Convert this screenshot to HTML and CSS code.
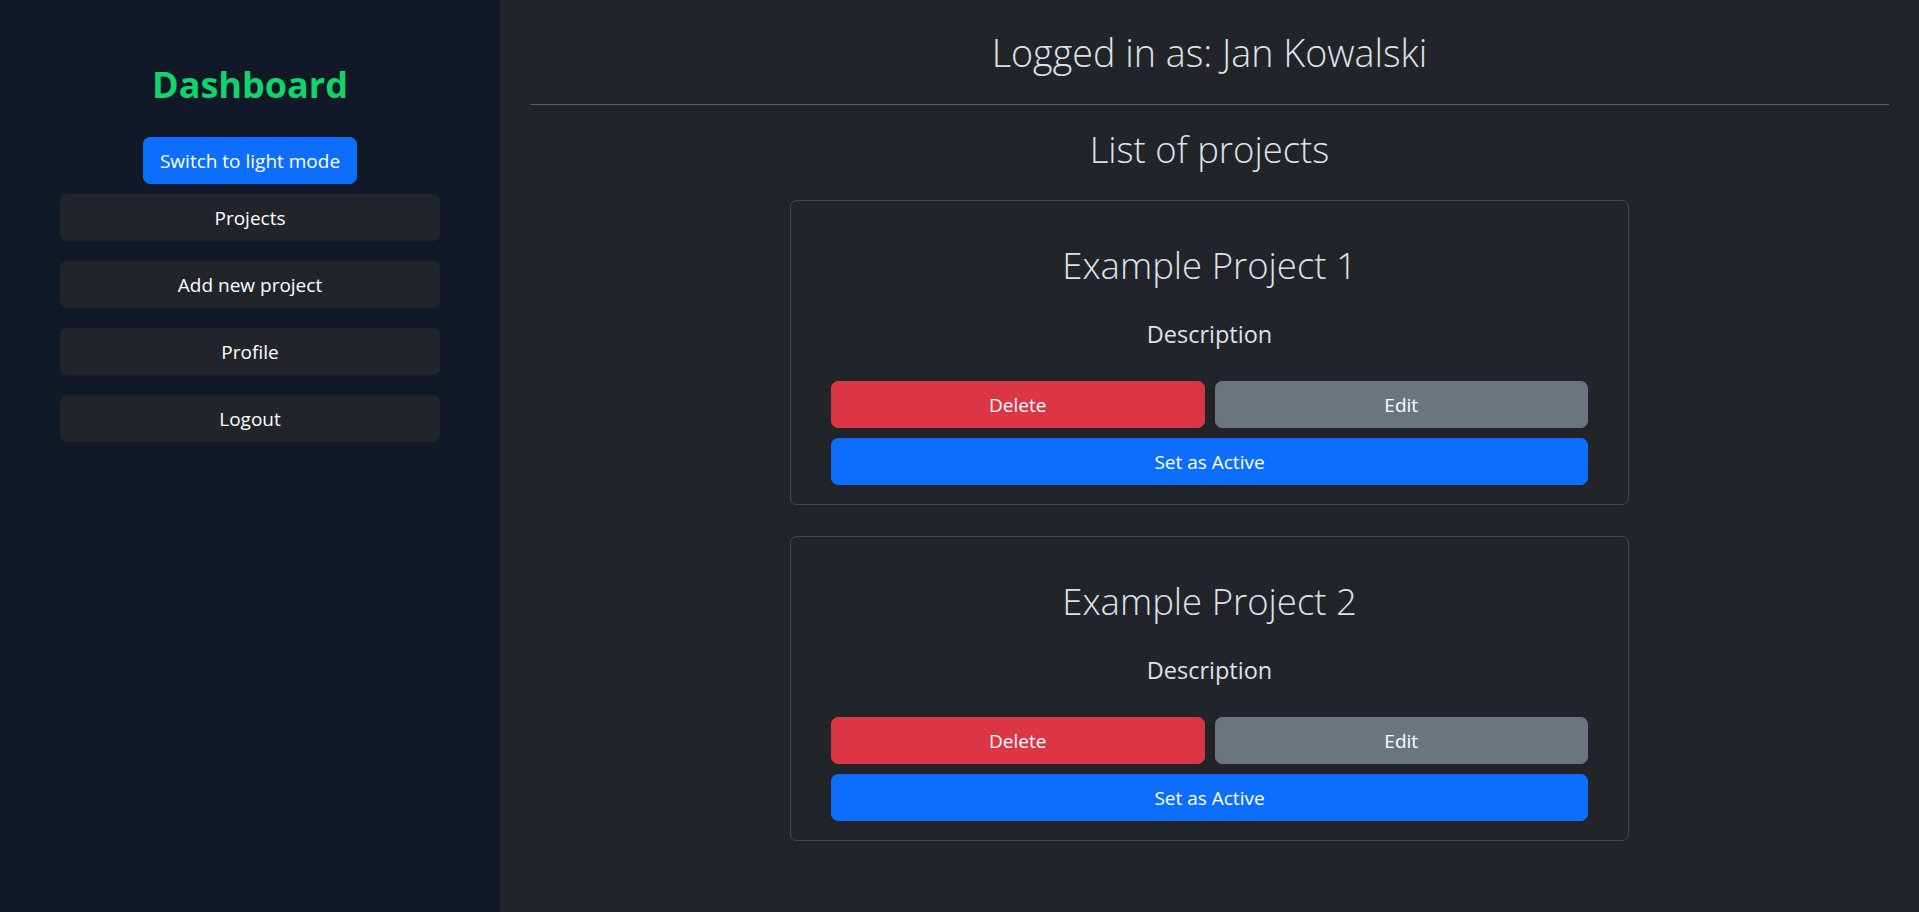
FILE: index.html
```html
<!DOCTYPE html>
<html lang="en">
<head>
<meta charset="utf-8">
<title>Dashboard</title>
<link rel="stylesheet" href="styles.css">
</head>
<body>
<div class="layout">
  <aside class="sidebar">
    <h1 class="brand">Dashboard</h1>
    <button class="btn btn-primary btn-switch">Switch to light mode</button>
    <nav class="nav">
      <a class="nav-item" href="#">Projects</a>
      <a class="nav-item" href="#">Add new project</a>
      <a class="nav-item" href="#">Profile</a>
      <a class="nav-item" href="#">Logout</a>
    </nav>
  </aside>
  <main class="main">
    <h1 class="user">Logged in as: Jan Kowalski</h1>
    <hr class="divider">
    <h2 class="list-title">List of projects</h2>
    <div class="cards">
      <section class="card">
        <h2 class="card-title">Example Project 1</h2>
        <h4 class="card-desc">Description</h4>
        <div class="actions">
          <button class="btn btn-danger">Delete</button>
          <button class="btn btn-secondary">Edit</button>
          <button class="btn btn-primary btn-wide">Set as Active</button>
        </div>
      </section>
      <section class="card">
        <h2 class="card-title">Example Project 2</h2>
        <h4 class="card-desc">Description</h4>
        <div class="actions">
          <button class="btn btn-danger">Delete</button>
          <button class="btn btn-secondary">Edit</button>
          <button class="btn btn-primary btn-wide">Set as Active</button>
        </div>
      </section>
    </div>
  </main>
</div>
</body>
</html>
```
FILE: styles.css
```css
* { box-sizing: border-box; }
html, body { margin: 0; padding: 0; height: 100%; }
body {
  font-family: "Open Sans", "Noto Sans", sans-serif;
  color: #dee2e6;
  background: #212529;
}
.layout {
  display: flex;
  min-height: 912px;
}
.sidebar {
  width: 500px;
  flex: 0 0 500px;
  background: #111827;
  display: flex;
  flex-direction: column;
  align-items: center;
  padding: 0 60px;
}
.brand {
  margin: 63px 0 0;
  font-size: 36px;
  line-height: 44px;
  font-weight: 700;
  color: #12d36c;
}
.btn {
  font-family: inherit;
  font-size: 19px;
  line-height: 28px;
  border: 1px solid transparent;
  border-radius: 7px;
  color: #fff;
  padding: 9px 16px;
  height: 47px;
  cursor: pointer;
}
.btn-primary { background: #0d6efd; border-color: #0d6efd; }
.btn-danger { background: #dc3545; border-color: #dc3545; }
.btn-secondary { background: #6c757d; border-color: #6c757d; }
.btn-switch {
  margin-top: 30px;
  width: 214px;
  padding: 9px 0;
}
.nav {
  margin-top: 10px;
  width: 100%;
  display: flex;
  flex-direction: column;
  gap: 20px;
}
.nav-item {
  display: flex;
  align-items: center;
  justify-content: center;
  height: 47px;
  border-radius: 7px;
  background: #212529;
  color: #fff;
  text-decoration: none;
  font-size: 19px;
}
.main {
  flex: 1;
  padding: 0 30px 40px;
  display: flex;
  flex-direction: column;
  align-items: center;
}
.user {
  margin: 30px 0 0;
  font-size: 37.7px;
  line-height: 46px;
  font-weight: 300;
}
.divider {
  align-self: stretch;
  margin: 28px 0 0;
  border: 0;
  border-top: 1px solid #5a5e63;
  height: 0;
}
.list-title {
  margin: 22px 0 0;
  font-size: 36.5px;
  line-height: 44px;
  font-weight: 300;
}
.cards {
  margin-top: 29px;
  display: flex;
  flex-direction: column;
  gap: 31px;
}
.card {
  width: 839px;
  border: 1px solid #45494f;
  border-radius: 7px;
  padding: 43px 40px 19px;
  display: flex;
  flex-direction: column;
  align-items: center;
}
.card-title {
  margin: 0;
  font-size: 36.5px;
  line-height: 42px;
  font-weight: 300;
}
.card-desc {
  margin: 33px 0 0;
  font-size: 23.5px;
  line-height: 30px;
  font-weight: 400;
}
.actions {
  margin-top: 32px;
  align-self: stretch;
  display: grid;
  grid-template-columns: 1fr 1fr;
  gap: 10px;
}
.btn-wide { grid-column: 1 / -1; }
```
